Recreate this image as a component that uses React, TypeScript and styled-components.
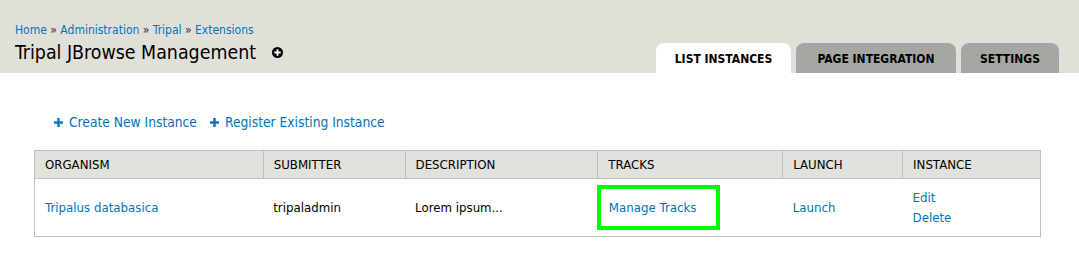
import React from 'react';
import styled, {createGlobalStyle} from 'styled-components';

const GlobalStyle = createGlobalStyle`
  body {
    margin: 0;
    background: #fff;
    font-family: "DejaVu Sans", "Liberation Sans", sans-serif;
    color: #333;
  }
`;

const Branding = styled.div`
  background: #e0e0d8;
  height: 73px;
  padding: 0 20px 0 15px;
  display: flex;
  justify-content: space-between;
  align-items: flex-end;
  box-sizing: border-box;
`;

const TitleBlock = styled.div`
  padding-bottom: 9px;
`;

const Breadcrumb = styled.div`
  font-family: "DejaVu Sans Condensed", "DejaVu Sans", sans-serif;
  font-size: 12px;
  color: #333;
  margin-bottom: 4px;
  a {
    color: #0074bd;
    text-decoration: none;
  }
`;

const Title = styled.h1`
  margin: 0;
  font-family: "DejaVu Sans Condensed", "DejaVu Sans", sans-serif;
  font-size: 19.4px;
  font-weight: normal;
  color: #000;
  display: flex;
  align-items: center;
  gap: 16px;
`;

const Tabs = styled.ul`
  display: flex;
  gap: 5px;
  list-style: none;
  margin: 0;
  padding: 0;
`;

const Tab = styled.li<{$active?: boolean; $w: number}>`
  background: ${p => (p.$active ? '#fff' : '#a6a7a2')};
  border-radius: 8px 8px 0 0;
  width: ${p => p.$w}px;
  height: 30px;
  padding-top: 2px;
  box-sizing: border-box;
  display: flex;
  align-items: center;
  justify-content: center;
  font-family: "DejaVu Sans Condensed", "DejaVu Sans", sans-serif;
  font-size: 12px;
  font-weight: bold;
  color: #000;
`;

const Content = styled.div`
  padding: 41px 38px 0 34px;
`;

const Actions = styled.ul`
  display: flex;
  gap: 13px;
  list-style: none;
  margin: 0 0 20px 20px;
  padding: 0;
`;

const ActionLink = styled.a`
  color: #0074bd;
  font-family: "DejaVu Sans Condensed", "DejaVu Sans", sans-serif;
  font-size: 13.7px;
  text-decoration: none;
  display: flex;
  align-items: center;
  gap: 6px;
`;

const Table = styled.table`
  width: 1007px;
  border-collapse: collapse;
  border: 1px solid #bebfb9;
  font-size: 11.8px;
`;

const Th = styled.th<{$w: number}>`
  width: ${p => p.$w}px;
  background: #e1e2dc;
  border: 1px solid #bebfb9;
  font-weight: normal;
  text-align: left;
  color: #000;
  height: 28px;
  padding: 0 10px;
  box-sizing: border-box;
`;

const Td = styled.td`
  height: 57px;
  padding: 0 10px;
  color: #000;
  vertical-align: middle;
  line-height: 20px;
`;

const Link = styled.a`
  color: #0074bd;
  text-decoration: none;
  display: block;
`;

const Highlight = styled.div`
  border: 4px solid #00ff00;
  margin: 0 0 0 -11px;
  width: 123px;
  height: 45px;
  box-sizing: border-box;
  display: flex;
  align-items: center;
  padding-left: 8px;
`;

const Plus = () => (
  <svg width="9" height="9" viewBox="0 0 9 9">
    <path d="M3.3 0h2.4v3.3H9v2.4H5.7V9H3.3V5.7H0V3.3h3.3z" fill="#0074bd" />
  </svg>
);

const AddShortcut = () => (
  <svg width="11" height="11" viewBox="0 0 11 11">
    <circle cx="5.5" cy="5.5" r="5.5" fill="#000" />
    <path d="M4.6 2.3h1.8v2.3h2.3v1.8H6.4v2.3H4.6V6.4H2.3V4.6h2.3z" fill="#fff" />
  </svg>
);

const App: React.FC = () => {
  return (
    <>
      <GlobalStyle />
      <Branding>
        <TitleBlock>
          <Breadcrumb>
            <a href="#">Home</a> » <a href="#">Administration</a> » <a href="#">Tripal</a> »{' '}
            <a href="#">Extensions</a>
          </Breadcrumb>
          <Title>
            Tripal JBrowse Management <AddShortcut />
          </Title>
        </TitleBlock>
        <Tabs>
          <Tab $active $w={135}>LIST INSTANCES</Tab>
          <Tab $w={160}>PAGE INTEGRATION</Tab>
          <Tab $w={98}>SETTINGS</Tab>
        </Tabs>
      </Branding>
      <Content>
        <Actions>
          <li>
            <ActionLink href="#">
              <Plus /> Create New Instance
            </ActionLink>
          </li>
          <li>
            <ActionLink href="#">
              <Plus /> Register Existing Instance
            </ActionLink>
          </li>
        </Actions>
        <Table>
          <thead>
            <tr>
              <Th $w={229}>ORGANISM</Th>
              <Th $w={142}>SUBMITTER</Th>
              <Th $w={193}>DESCRIPTION</Th>
              <Th $w={185}>TRACKS</Th>
              <Th $w={120}>LAUNCH</Th>
              <Th $w={138}>INSTANCE</Th>
            </tr>
          </thead>
          <tbody>
            <tr>
              <Td>
                <Link href="#">Tripalus databasica</Link>
              </Td>
              <Td>tripaladmin</Td>
              <Td>Lorem ipsum...</Td>
              <Td>
                <Highlight>
                  <Link href="#">Manage Tracks</Link>
                </Highlight>
              </Td>
              <Td>
                <Link href="#">Launch</Link>
              </Td>
              <Td>
                <Link href="#">Edit</Link>
                <Link href="#">Delete</Link>
              </Td>
            </tr>
          </tbody>
        </Table>
      </Content>
    </>
  );
};

export default App;
